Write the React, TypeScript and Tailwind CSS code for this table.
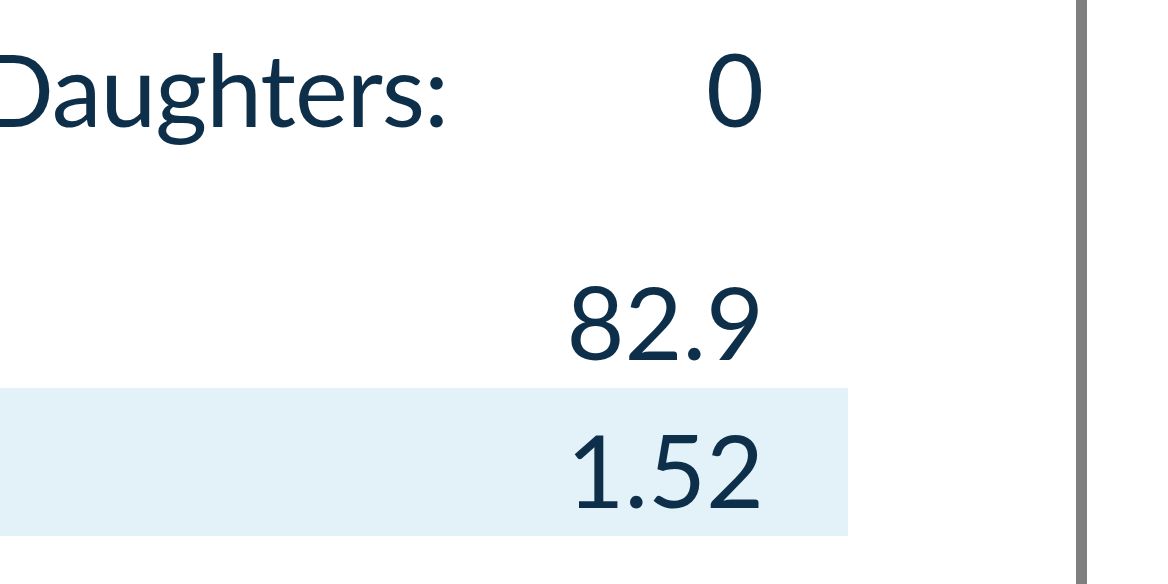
import React from "react";

const rows = [
  { label: "Daughters:", value: "0", shaded: false },
  { label: "", value: "82.9", shaded: false },
  { label: "", value: "1.52", shaded: true },
];

const App: React.FC = () => {
  return (
    <div className="h-[584px] w-[1168px] overflow-hidden bg-white font-['Lato',sans-serif] text-[#0d2f4a]">
      <div className="flex h-full">
        {/* Stats table */}
        <div className="w-[848px] pt-[7px]">
          {rows.map((row, i) => (
            <div
              key={i}
              className={`flex h-[148px] items-center justify-between pt-[14px] pr-[84px] text-[100px] leading-none ${
                row.shaded ? "bg-[#e3f1f8]" : ""
              } ${i === 1 ? "mt-[85px]" : ""}`}
            >
              <span className="-ml-[22px] tracking-[-1px]">{row.label}</span>
              <span>{row.value}</span>
            </div>
          ))}
        </div>

        {/* Divider */}
        <div className="ml-[228px] h-full w-[11px] bg-[#7f7f7f]" />
      </div>
    </div>
  );
};

export default App;
